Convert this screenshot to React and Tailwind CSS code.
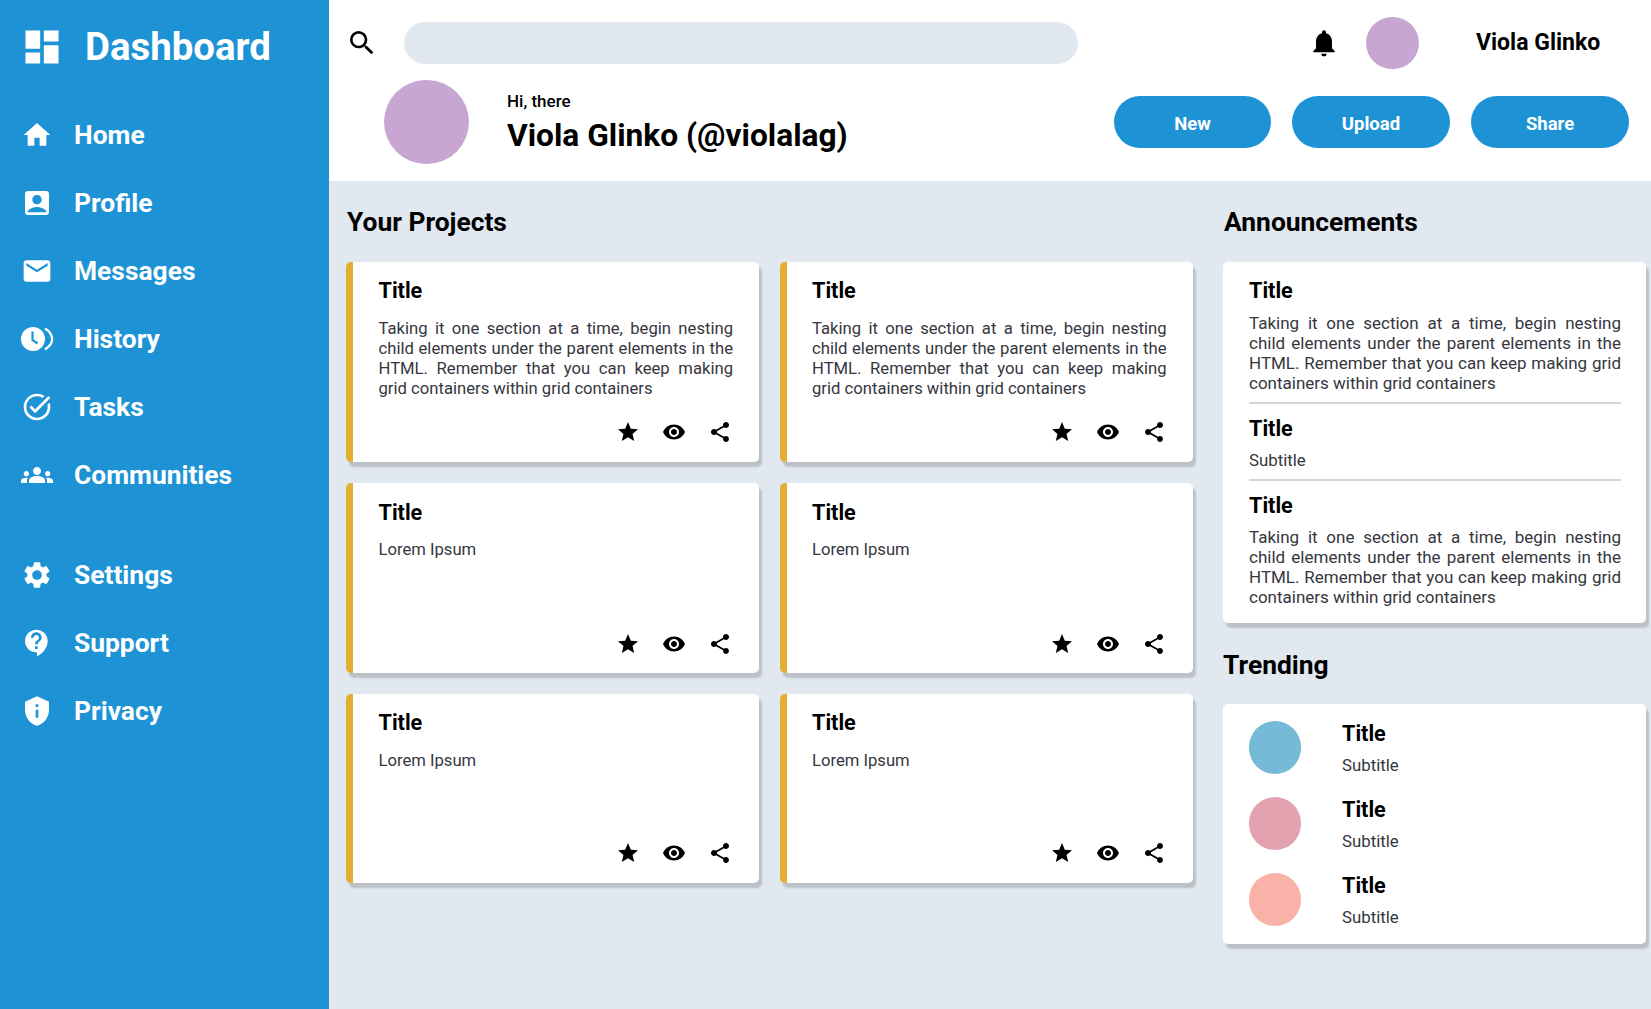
import {
  MdDashboard, MdHome, MdAccountBox, MdEmail, MdTaskAlt, MdGroups, MdSettings,
  MdContactSupport, MdPrivacyTip, MdSearch, MdNotifications, MdStar, MdVisibility, MdShare,
} from 'react-icons/md';

const LOREM = 'Taking it one section at a time, begin nesting child elements under the parent elements in the HTML. Remember that you can keep making grid containers within grid containers';
const title = 'Title';

function HistoryIcon() {
  return (
    <svg width="32" height="32" viewBox="0 0 32 32" fill="none">
      <circle cx="12" cy="16" r="12" fill="white" />
      <path d="M11.500 8.500V17l5 3.500" stroke="#1d93d6" strokeWidth="2.200" />
      <path d="M24 5.500c9.500 6 9.500 15 0 21" stroke="white" strokeWidth="2.200" />
    </svg>
  );
}

const navTop = [
  { label: 'Home', icon: <MdHome size={32} /> },
  { label: 'Profile', icon: <MdAccountBox size={32} /> },
  { label: 'Messages', icon: <MdEmail size={32} /> },
  { label: 'History', icon: <HistoryIcon /> },
  { label: 'Tasks', icon: <MdTaskAlt size={32} /> },
  { label: 'Communities', icon: <MdGroups size={32} /> },
];

const navBottom = [
  { label: 'Settings', icon: <MdSettings size={32} /> },
  { label: 'Support', icon: <MdContactSupport size={32} /> },
  { label: 'Privacy', icon: <MdPrivacyTip size={32} /> },
];

const projects = [
  { text: LOREM, box: 'h-[200px] pt-[17px] pb-[18px]', gap: 'mt-[16px]' },
  { text: LOREM, box: 'h-[200px] pt-[17px] pb-[18px]', gap: 'mt-[16px]' },
  { text: 'Lorem Ipsum', box: 'h-[190px] pt-[18px] pb-[17px]', gap: 'mt-[15px]' },
  { text: 'Lorem Ipsum', box: 'h-[190px] pt-[18px] pb-[17px]', gap: 'mt-[15px]' },
  { text: 'Lorem Ipsum', box: 'h-[189px] pt-[17px] pb-[18px]', gap: 'mt-[16px]' },
  { text: 'Lorem Ipsum', box: 'h-[189px] pt-[17px] pb-[18px]', gap: 'mt-[16px]' },
];

const trending = ['bg-[#75bad6]', 'bg-[#e3a2b0]', 'bg-[#f8b2a7]'];

function NavItem({ label, icon }) {
  return (
    <div className="flex h-[68px] items-center">
      <div className="w-[32px] shrink-0">{icon}</div>
      <span className="ml-[21px] text-[26.400px] font-bold leading-none">{label}</span>
    </div>
  );
}

function ProjectCard({ text, box, gap }) {
  return (
    <div className={`flex flex-col rounded-[5px] border-l-[7px] border-[#e3ae32] bg-white pl-[25.500px] pr-[26px] shadow-[3px_5px_2px_rgba(0,0,0,0.17)] ${box}`}>
      <h3 className="text-[21.600px] font-bold leading-[24px] text-black">{title}</h3>
      <p className={`text-justify text-[16.650px] leading-[20px] text-[#363640] ${gap}`}>{text}</p>
      <div className="mr-[1px] mt-auto flex justify-end gap-[22px] text-black">
        <MdStar size={24} />
        <MdVisibility size={24} />
        <MdShare size={24} />
      </div>
    </div>
  );
}

function Announcement({ text, className, gap }) {
  return (
    <div className={className}>
      <h3 className="text-[21.600px] font-bold leading-[24px] text-black">{title}</h3>
      <p className={`text-justify text-[17px] leading-[20px] text-[#363640] ${gap}`}>{text}</p>
    </div>
  );
}

export default function App() {
  return (
    <div className="flex h-screen overflow-hidden bg-[#e1e8f0] font-[family-name:Roboto,sans-serif] text-black">
      <aside className="w-[329px] shrink-0 bg-[#1d93d6] pl-[21px] text-white">
        <div className="flex h-[94px] items-center">
          <MdDashboard size={44} className="-ml-[1px] shrink-0" />
          <span className="ml-[21px] text-[38.400px] font-bold leading-none">Dashboard</span>
        </div>
        <nav className="mt-[7px]">
          {navTop.map((n) => <NavItem key={n.label} {...n} />)}
          <div className="h-[32px]" />
          {navBottom.map((n) => <NavItem key={n.label} {...n} />)}
        </nav>
      </aside>

      <div className="flex min-w-0 flex-1 flex-col">
        <header className="h-[181px] shrink-0 bg-white">
          <div className="flex h-[80px] pt-[17px]">
            <MdSearch size={32} className="ml-[17px] mt-[10px] shrink-0" />
            <div className="ml-[26px] mt-[5px] h-[42px] w-[674px] rounded-full bg-[#e1e8f0]" />
            <MdNotifications size={32} className="ml-[230px] mt-[10px] shrink-0" />
            <div className="ml-[26px] h-[52px] w-[53px] rounded-full bg-[#c7a7d2]" />
            <span className="ml-[57px] mt-[11px] text-[23px] font-bold leading-[30px]">Viola Glinko</span>
          </div>
          <div className="flex h-[101px] items-start pl-[55px]">
            <div className="h-[84px] w-[85px] rounded-full bg-[#c7a7d2]" />
            <div className="ml-[38px] pt-[11px]">
              <div className="text-[17px] font-medium leading-[20px]">Hi, there</div>
              <div className="mt-[6px] text-[31.700px] font-bold leading-[38px]">Viola Glinko (@violalag)</div>
            </div>
            <div className="ml-auto mr-[22px] mt-[16px] flex gap-[21px]">
              <button className="h-[52px] w-[157px] rounded-full bg-[#1d93d6] pt-[5px] text-[18.500px] font-bold text-white">New</button>
              <button className="h-[52px] w-[158px] rounded-full bg-[#1d93d6] pt-[5px] text-[18.500px] font-bold text-white">Upload</button>
              <button className="h-[52px] w-[158px] rounded-full bg-[#1d93d6] pt-[5px] text-[18.500px] font-bold text-white">Share</button>
            </div>
          </div>
        </header>

        <main className="flex flex-1 pl-[17px] pr-[5px]">
          <section className="w-[847px]">
            <h2 className="h-[81px] pl-[1px] pt-[24px] text-[26.400px] font-bold leading-[34px]">Your Projects</h2>
            <div className="grid grid-cols-[413px_413px] gap-y-[21px] gap-x-[20.500px]">
              {projects.map((p, i) => <ProjectCard key={i} {...p} />)}
            </div>
          </section>

          <section className="ml-[30px] flex-1">
            <h2 className="h-[81px] pl-[1px] pt-[24px] text-[26.400px] font-bold leading-[34px]">Announcements</h2>
            <div className="h-[361px] rounded-[5px] bg-white pl-[26px] pr-[25px] pt-[17px] shadow-[3px_5px_2px_rgba(0,0,0,0.17)]">
              <Announcement text={LOREM} gap="mt-[10px]" className="h-[125px] border-b-2 border-[#d4d5da]" />
              <div className="h-[77px] border-b-2 border-[#d4d5da] pt-[13px]">
                <h3 className="text-[21.600px] font-bold leading-[24px] text-black">{title}</h3>
                <p className="mt-[9px] text-[16.800px] leading-[20px] text-[#363640]">Subtitle</p>
              </div>
              <Announcement text={LOREM} gap="mt-[9px]" className="pt-[13px]" />
            </div>

            <h2 className="mt-[25px] h-[56px] text-[26.400px] font-bold leading-[34px]">Trending</h2>
            <div className="flex h-[240px] flex-col gap-[23px] rounded-[5px] bg-white pl-[26px] pt-[17px] shadow-[3px_5px_2px_rgba(0,0,0,0.17)]">
              {trending.map((c) => (
                <div key={c} className="flex h-[53px]">
                  <div className={`h-[53px] w-[52px] rounded-full ${c}`} />
                  <div className="ml-[41px] pt-[1px]">
                    <h3 className="text-[21.600px] font-bold leading-[24px] text-black">{title}</h3>
                    <p className="mt-[9px] text-[16.800px] leading-[20px] text-[#363640]">Subtitle</p>
                  </div>
                </div>
              ))}
            </div>
          </section>
        </main>
      </div>
    </div>
  );
}
